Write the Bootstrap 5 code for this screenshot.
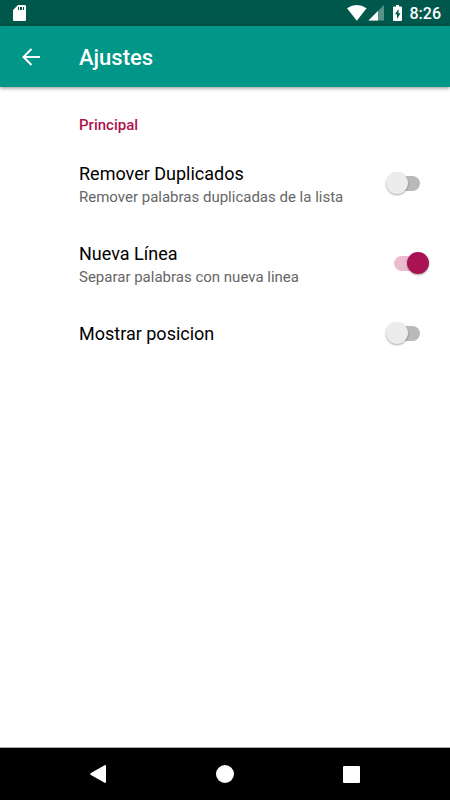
<!DOCTYPE html>
<html lang="es">
<head>
<meta charset="utf-8">
<meta name="viewport" content="width=device-width, initial-scale=1">
<title>Ajustes</title>
<link href="https://cdn.jsdelivr.net/npm/bootstrap@5.3.0/dist/css/bootstrap.min.css" rel="stylesheet">
<style>
  body { font-family: Roboto, "Liberation Sans", sans-serif; background: #fff; color: #000; }
  .status-bar { background: #00574b; height: 26px; padding: 0 9px 0 13px; color: #fff; }
  .clock { font-size: 16px; line-height: 24px; font-weight: 500; margin-left: 8px; padding-top: 2px; }
  .app-bar { background: #009688; height: 61px; padding: 0 17px; color: #fff; box-shadow: 0 1px 4px rgba(0, 0, 0, .45); }
  .back { width: 28px; height: 28px; margin-right: 34px; color: #fff; }
  .app-title { font-size: 22px; line-height: 28px; font-weight: 500; padding-top: 2px; }
  .settings { padding: 26px 21px 0 79px; }
  .section-title { font-size: 15px; line-height: 24px; font-weight: 500; color: #b0124f; margin-bottom: 7px; }
  .setting { min-height: 60px; }
  .setting-tall { min-height: 80px; }
  .setting-tall label { padding-top: 2px; }
  .setting-name { font-size: 18px; line-height: 24px; }
  .setting-note { font-size: 15px; line-height: 22px; color: #666; }
  .toggle { appearance: none; position: relative; width: 44px; height: 23px; margin: 0 0 2px; cursor: pointer; }
  .toggle::before, .toggle::after { content: ""; position: absolute; }
  .toggle::before { left: 1px; top: 4px; width: 34px; height: 15px; border-radius: 8px; background: #b9b9b9; }
  .toggle::after { left: 1px; top: 0; width: 22px; height: 22px; border-radius: 50%; background: #ececec; box-shadow: 0 1px 2px rgba(0, 0, 0, .35); }
  .toggle:checked::before { left: 9px; background: #ebbcd0; }
  .toggle:checked::after { left: 22px; background: #a91354; }
  .system-nav { background: #000; height: 53px; padding: 0 35px; border-top: 1px solid #aaa; }
  .system-nav button { color: #fff; }
</style>
<script src="https://cdn.jsdelivr.net/npm/bootstrap@5.3.0/dist/js/bootstrap.bundle.min.js"></script>
</head>
<body class="d-flex flex-column min-vh-100">
<div class="status-bar d-flex align-items-center">
  <svg class="me-auto" width="14" height="16" viewBox="0 0 14 16" fill="#fff" aria-hidden="true"><path fill-rule="evenodd" d="M5 0h7q1 0 1 1v14q0 1-1 1H1q-1 0-1-1V5zM5 2v3h1V2zm2 0v3h2V2zm3 0v3h1V2z"/></svg>
  <svg width="56" height="16" viewBox="0 0 56 16" fill="#fff" aria-hidden="true">
    <path d="M1 3.300Q10.800-3.300 20.600 3.300L10.800 15.700z"/>
    <path opacity=".35" d="M38 0v15.500H22.500z"/>
    <path d="M32 6v9.500h-9.500z"/>
    <path fill-rule="evenodd" d="M50 0h3v1.500h2q1 0 1 1V15q0 1-1 1h-7q-1 0-1-1V2.500q0-1 1-1h2zM52.500 4L49 9.300h2V14l3.500-5.800h-2z"/>
  </svg>
  <span class="clock">8:26</span>
</div>
<header class="app-bar d-flex align-items-center">
  <button type="button" class="back btn border-0 p-0 d-flex align-items-center justify-content-center" aria-label="Atrás">
    <svg width="18" height="18" viewBox="0 0 18 18" fill="none" stroke="currentColor" stroke-width="2"><path d="M18 9H2M9.500 1L1.500 9l8 8"/></svg>
  </button>
  <h1 class="app-title m-0">Ajustes</h1>
</header>
<main class="settings flex-grow-1">
  <h2 class="section-title">Principal</h2>
  <div class="setting setting-tall d-flex align-items-center justify-content-between">
    <label for="dup"><span class="setting-name d-block">Remover Duplicados</span><span class="setting-note d-block">Remover palabras duplicadas de la lista</span></label>
    <input class="toggle flex-shrink-0" type="checkbox" role="switch" id="dup">
  </div>
  <div class="setting setting-tall d-flex align-items-center justify-content-between">
    <label for="linea"><span class="setting-name d-block">Nueva Línea</span><span class="setting-note d-block">Separar palabras con nueva linea</span></label>
    <input class="toggle flex-shrink-0" type="checkbox" role="switch" id="linea" checked>
  </div>
  <div class="setting d-flex align-items-center justify-content-between">
    <label for="pos" class="setting-name">Mostrar posicion</label>
    <input class="toggle flex-shrink-0" type="checkbox" role="switch" id="pos">
  </div>
</main>
<nav class="system-nav row g-0" aria-label="Sistema">
  <button type="button" class="col btn border-0 p-0 d-flex align-items-center justify-content-center" aria-label="Volver"><svg width="16" height="18" viewBox="0 0 16 18" fill="currentColor"><path d="M15 0q1 0 1 1v16q0 1-1 1L.5 9.700Q0 9 .5 8.300z"/></svg></button>
  <button type="button" class="col btn border-0 p-0 d-flex align-items-center justify-content-center" aria-label="Inicio"><svg width="18" height="18" viewBox="0 0 18 18" fill="currentColor"><circle cx="9" cy="9" r="9"/></svg></button>
  <button type="button" class="col btn border-0 p-0 d-flex align-items-center justify-content-center" aria-label="Recientes"><svg width="17" height="17" viewBox="0 0 17 17" fill="currentColor"><rect width="17" height="17" rx="1"/></svg></button>
</nav>
</body>
</html>
